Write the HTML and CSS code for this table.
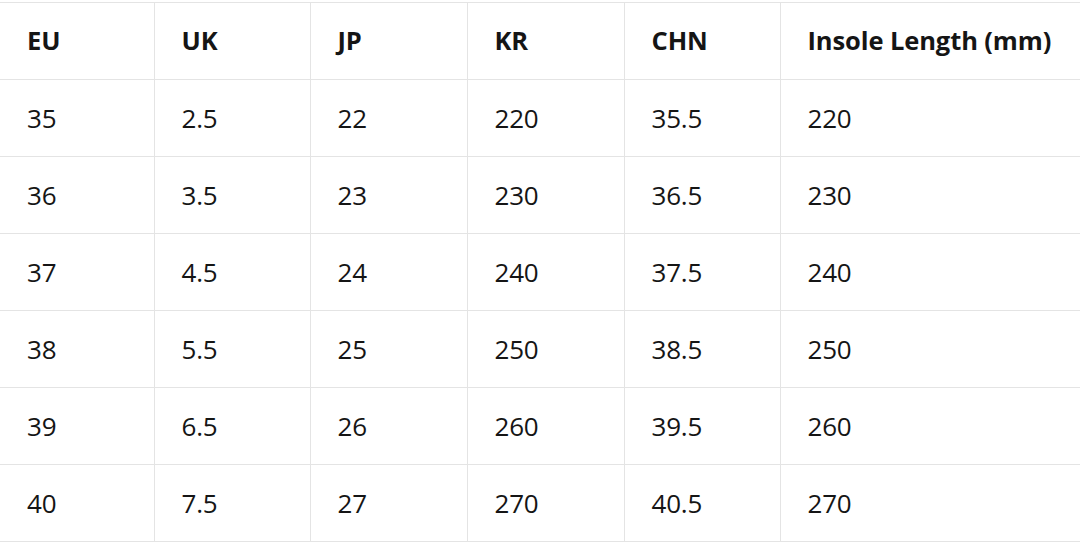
FILE: index.html
```html
<!DOCTYPE html>
<html>
<head>
<meta charset="utf-8">
<link rel="stylesheet" href="styles.css">
</head>
<body>
<table class="size-table">
  <colgroup>
    <col class="c1"><col class="c2"><col class="c3"><col class="c4"><col class="c5"><col class="c6">
  </colgroup>
  <thead>
    <tr><th>EU</th><th>UK</th><th>JP</th><th>KR</th><th>CHN</th><th>Insole Length (mm)</th></tr>
  </thead>
  <tbody>
    <tr><td>35</td><td>2.5</td><td>22</td><td>220</td><td>35.5</td><td>220</td></tr>
    <tr><td>36</td><td>3.5</td><td>23</td><td>230</td><td>36.5</td><td>230</td></tr>
    <tr><td>37</td><td>4.5</td><td>24</td><td>240</td><td>37.5</td><td>240</td></tr>
    <tr><td>38</td><td>5.5</td><td>25</td><td>250</td><td>38.5</td><td>250</td></tr>
    <tr><td>39</td><td>6.5</td><td>26</td><td>260</td><td>39.5</td><td>260</td></tr>
    <tr><td>40</td><td>7.5</td><td>27</td><td>270</td><td>40.5</td><td>270</td></tr>
  </tbody>
</table>
</body>
</html>
```
FILE: styles.css
```css
html, body {
  margin: 0;
  padding: 0;
  background: #ffffff;
}
.size-table {
  margin-top: 2px;
  width: 1080px;
  border-collapse: collapse;
  table-layout: fixed;
  font-family: "Open Sans", "Noto Sans", sans-serif;
  color: #151515;
}
.c1 { width: 154px; }
.c2 { width: 156px; }
.c3 { width: 157px; }
.c4 { width: 157px; }
.c5 { width: 156px; }
.c6 { width: 300px; }
.size-table th,
.size-table td {
  height: 76px;
  padding: 0 0 0 27px;
  border: 1px solid #e4e4e4;
  text-align: left;
  vertical-align: middle;
  white-space: nowrap;
  line-height: 1;
}
.size-table th {
  font-weight: 700;
  font-size: 25.5px;
  letter-spacing: -0.1px;
}
.size-table td {
  font-weight: 400;
  font-size: 26px;
  letter-spacing: -0.2px;
}
.size-table tr > :first-child { border-left: none; }
.size-table tr > :last-child { border-right: none; }
```
